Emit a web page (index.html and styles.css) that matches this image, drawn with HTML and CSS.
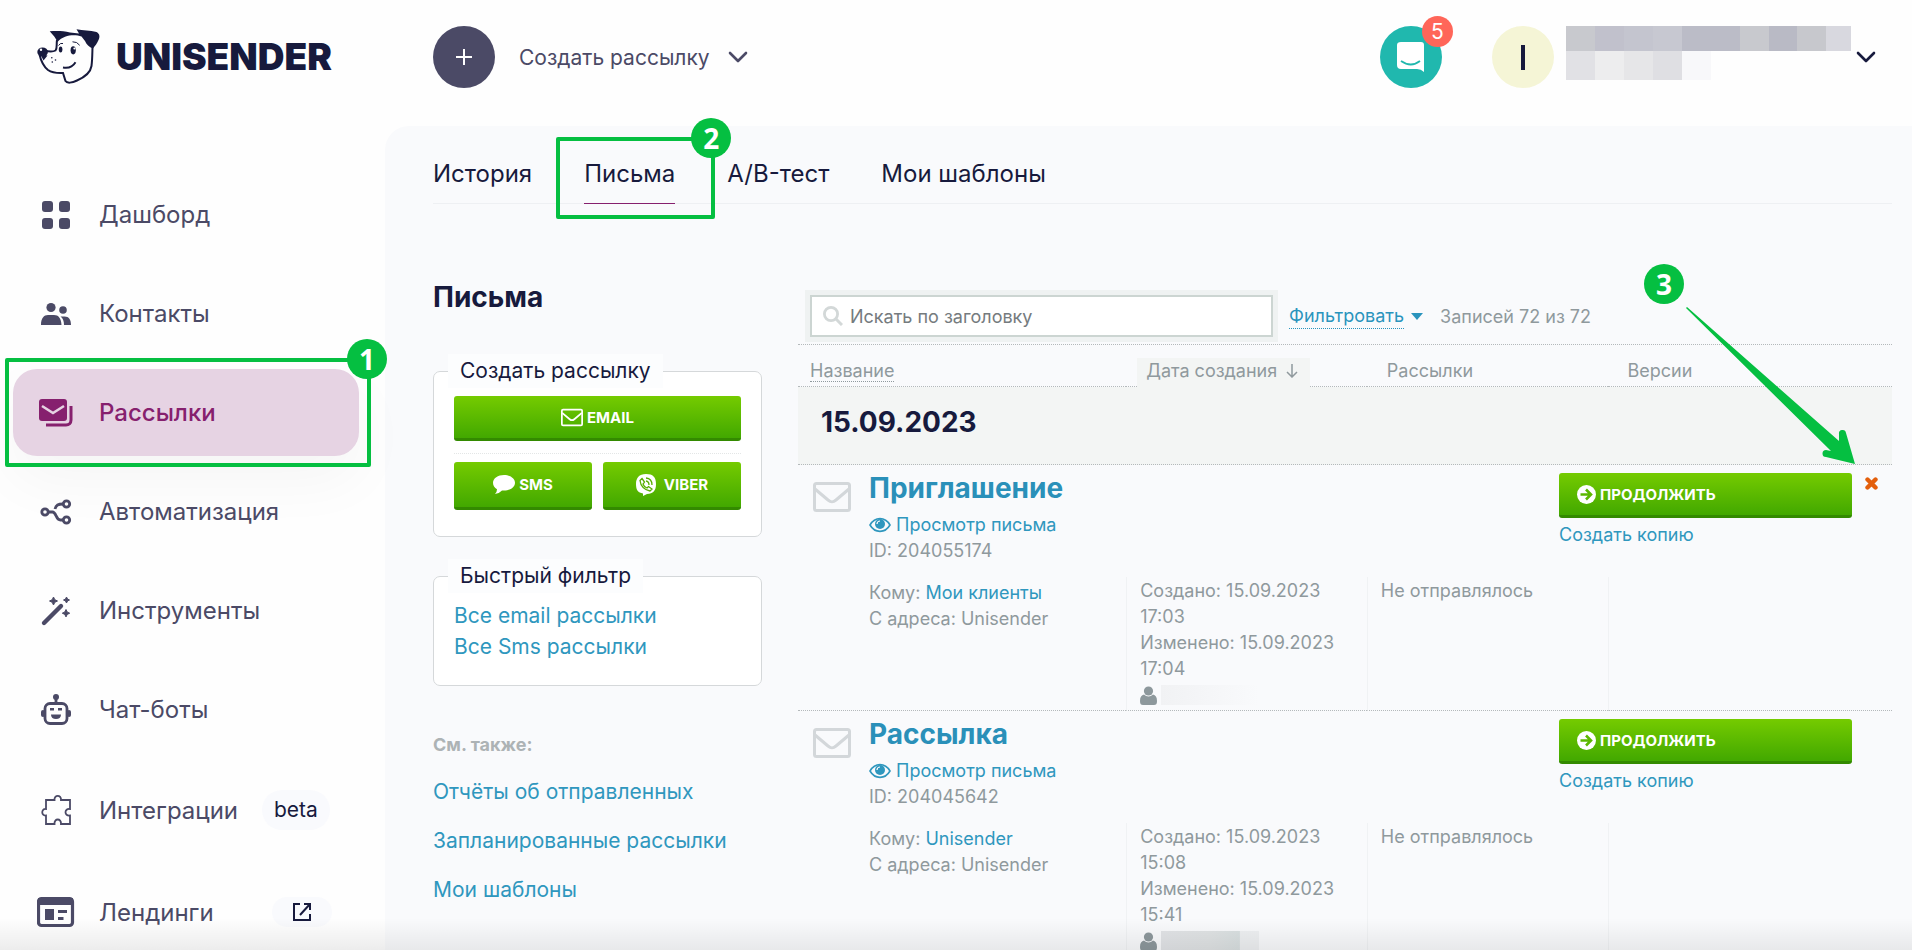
FILE: index.html
```html
<!DOCTYPE html>
<html lang="ru">
<head>
<meta charset="utf-8">
<title>Unisender — Письма</title>
<link rel="stylesheet" href="styles.css">
</head>
<body>
<svg class="sprite" aria-hidden="true">
  <symbol id="i-mail" viewBox="0 0 38 30"><rect x="1.5" y="1.5" width="35" height="27" rx="2"/><path d="M2 7l13 11c3 2.500 5 2.500 8 0l13-11"/></symbol>
  <symbol id="i-eye" viewBox="0 0 22 16"><path d="M1 8c5-8.500 15-8.500 20 0c-5 8.500-15 8.500-20 0z" fill="none" stroke="currentColor" stroke-width="1.600"/><circle cx="11" cy="7" r="5" fill="currentColor"/><path d="M8 7a3 3 0 0 1 3-3" fill="none" stroke="#fff" stroke-width="1.200"/></symbol>
  <symbol id="i-user" viewBox="0 0 17 19"><circle cx="8.500" cy="5" r="4.600"/><path d="M0 15c0-4 1.500-6 4-6.500c2.500 2.500 6.500 2.500 9 0c2.500.5 4 2.500 4 6.500c0 3-1 4-3 4h-11c-2 0-3-1-3-4z"/></symbol>
  <symbol id="i-go" viewBox="0 0 19 19"><circle cx="9.500" cy="9.500" r="9.500" fill="#fff"/><path d="M3.500 9.500h10M9 4.500l5 5l-5 5" fill="none" stroke="#5cb800" stroke-width="2.600"/></symbol>
  <symbol id="i-cross" viewBox="0 0 13 13"><path d="M2.500 2.500l8 8M10.500 2.500l-8 8" stroke="#e35f0c" stroke-width="4.400" stroke-linecap="round"/></symbol>
  <symbol id="i-chevron" viewBox="0 0 20 12"><path d="M2 2l8 8l8-8" fill="none" stroke="currentColor" stroke-width="2.600" stroke-linecap="round" stroke-linejoin="round"/></symbol>
</svg>

<div class="app">
  <aside class="sidebar">
    <a class="logo" href="#">
      <svg class="logo-dog" viewBox="0 0 63 56" aria-hidden="true">
        <path d="M12.700 3.300C19 2.600 26 2.700 33 4.500L42 5.500L39.500 1.200C46 2.500 53 2.300 59.500 4C63 6 63 9 61.500 12C60 15.500 58 18 56 20.500C52 19 49.500 16.500 48 13L44.500 8.500C38 6.300 27 6.500 20.500 14C19 10.500 16.500 7.500 12.700 3.300z" fill="#171a3d"/>
        <path d="M20 12C19.200 17 20.500 20 18.500 22.500C15 24.500 11 23.500 7 22.500M2.500 26.500C4 33 6 38 11 42C16 45.500 21 45 26 45L28.500 53C30 55.500 35 55 40 52.500C48 49 53.500 44.500 54.500 38C55.300 32 55.300 26 55.500 19" fill="none" stroke="#171a3d" stroke-width="2"/>
        <ellipse cx="5.600" cy="24" rx="5.300" ry="4.600" fill="#171a3d"/><path d="M3.500 26.500l3 6l4-5z" fill="#171a3d"/><circle cx="4" cy="21.800" r="1.200" fill="#fff"/>
        <ellipse cx="23.600" cy="21.500" rx="1.800" ry="2.900" fill="#171a3d"/><ellipse cx="36.200" cy="22.300" rx="2.600" ry="4.100" fill="#171a3d"/><circle cx="37.400" cy="20.500" r="1.100" fill="#fff"/>
        <path d="M21.500 17.500q2-3 4.500-2M35.500 13.800q4.500-.3 7.200 3.500" fill="none" stroke="#171a3d" stroke-width="1"/>
        <path d="M26 39.500Q34.500 41 38.500 34.200" fill="none" stroke="#171a3d" stroke-width="1.900"/>
        <circle cx="14.800" cy="29.800" r=".8" fill="#171a3d"/><circle cx="18.500" cy="32" r=".8" fill="#171a3d"/><circle cx="15.300" cy="34" r=".8" fill="#171a3d"/>
      </svg>
      <span class="logo-text">UNISENDER</span>
    </a>
    <nav class="menu" aria-label="Главное меню">
      <a class="menu-item" href="#"><svg class="menu-icon" viewBox="0 0 38 32"><g fill="#4b4a66"><rect x="5" y="2" width="11" height="11" rx="3"/><rect x="22" y="2" width="11" height="11" rx="3"/><rect x="5" y="19" width="11" height="11" rx="3"/><rect x="22" y="19" width="11" height="11" rx="3"/></g></svg>Дашборд</a>
      <a class="menu-item" href="#"><svg class="menu-icon" viewBox="0 0 38 32"><g fill="#4b4a66"><circle cx="14" cy="9.500" r="4.600"/><circle cx="26" cy="12" r="3.800"/><path d="M4 27c0-7 3-10 7-10h6c4.500 0 7 3 7.500 10zM23.500 18.500h4c4.500 0 6.500 3 6.500 8.500h-7c0-4-1-6.500-3.500-8.500z"/></g></svg>Контакты</a>
      <a class="menu-item menu-item-active" href="#" aria-current="page"><svg class="menu-icon" viewBox="0 0 38 32"><rect x="2" y="2" width="28" height="22" rx="3" fill="#86206e"/><path d="M5 9l11 7l11-7" fill="none" stroke="#e6d3e3" stroke-width="2.600"/><path d="M34 9v14c0 3-2 5-5 5H9" fill="none" stroke="#86206e" stroke-width="3"/></svg>Рассылки<span class="mark-frame mark-frame-menu"><span class="mark-number">1</span></span></a>
      <a class="menu-item" href="#"><svg class="menu-icon" viewBox="0 0 38 32"><g fill="none" stroke="#4b4a66" stroke-width="2.800"><circle cx="8" cy="16" r="3.200"/><circle cx="29.500" cy="8" r="3.200"/><circle cx="29.500" cy="24" r="3.200"/><path d="M11.500 16h4c4 0 3 8 8 8h2.500M18 13c1-4 3-5 8-5"/></g></svg>Автоматизация</a>
      <a class="menu-item" href="#"><svg class="menu-icon" viewBox="0 0 38 32"><path d="M7 28L24 11" stroke="#4b4a66" stroke-width="4.400" stroke-linecap="round"/><g fill="#4b4a66"><path d="M16.500 2l1.300 2.700l2.700 1.300l-2.700 1.300l-1.300 2.700l-1.300-2.700l-2.700-1.300l2.700-1.300z" stroke="#4b4a66"/><path d="M29.500 2l1 2l2 1l-2 1l-1 2l-1-2l-2-1l2-1z" stroke="#4b4a66"/><path d="M29 14.500l1.200 2.500l2.500 1.200l-2.500 1.200l-1.200 2.500l-1.200-2.500l-2.500-1.200l2.500-1.200z" stroke="#4b4a66"/></g></svg>Инструменты</a>
      <a class="menu-item" href="#"><svg class="menu-icon" viewBox="0 0 38 32"><g fill="none" stroke="#4b4a66" stroke-width="2.800"><rect x="8" y="9.500" width="22" height="20" rx="5"/><path d="M19 9V3"/></g><g fill="#4b4a66"><circle cx="19" cy="3" r="3"/><rect x="4" y="16" width="4" height="7" rx="2"/><rect x="30" y="16" width="4" height="7" rx="2"/><rect x="13" y="14" width="4" height="2.500"/><rect x="21" y="14" width="4" height="2.500"/><path d="M14 20.500h10c0 3-2 4.500-5 4.500s-5-1.500-5-4.500z"/></g></svg>Чат-боты</a>
      <a class="menu-item menu-item-tagged" href="#"><svg class="menu-icon" viewBox="0 0 38 32"><path d="M9 6h8.500c-.5-5.500 7-5.500 6.500 0H33v9c-6-1-6 7.500 0 6.500V30h-9c.5-6-7-6-6.500 0H9v-8.500c-5 .8-5-7.300 0-6.500z" fill="none" stroke="#4b4a66" stroke-width="1.800"/></svg>Интеграции<span class="tag">beta</span></a>
      <a class="menu-item menu-item-tagged" href="#"><svg class="menu-icon" viewBox="0 0 38 32"><rect x="1.500" y="2.500" width="34" height="27" rx="3" fill="none" stroke="#4b4a66" stroke-width="3.200"/><path d="M1 2h35v7H1z" fill="#4b4a66"/><path d="M8 13h9v11H8zM21 14h9v3h-9zM21 21h5.500v3H21z" fill="#4b4a66"/></svg>Лендинги<span class="tag tag-end"><svg class="ext-icon" viewBox="0 0 20 20"><path d="M8 2H2v16h16v-6M12 2h6v6M18 2L8 13" fill="none" stroke="#171a3d" stroke-width="2"/></svg></span></a>
    </nav>
  </aside>

  <div class="page">
    <header class="header">
      <button class="create" type="button"><span class="create-plus"><svg viewBox="0 0 16 16" class="plus-icon"><path d="M8 0v16M0 8h16" stroke="#fff" stroke-width="2"/></svg></span>Создать рассылку<svg class="chevron"><use href="#i-chevron"/></svg></button>
      <div class="header-right">
        <button class="chat" type="button" aria-label="Сообщения"><svg class="chat-icon" viewBox="0 0 28 31"><path d="M4 0h20q3 0 3 3v27q-3-3-7-3H4q-4 0-4-4V3q0-3 4-3z" fill="#fff"/><path d="M4 19q10 7 19 0" fill="none" stroke="#20b8ae" stroke-width="1.800"/></svg><span class="chat-count">5</span></button>
        <button class="account" type="button" aria-label="Аккаунт">
          <span class="avatar"><span class="avatar-bar"></span></span>
          <svg class="mosaic" viewBox="0 0 285 54" aria-hidden="true" shape-rendering="crispEdges">
            <path fill="#c8c9ce" d="M0 0h29v25H0z"/><path fill="#c1c1cc" d="M29 0h29v25H29z"/><path fill="#c4c5cf" d="M58 0h29v25H58z"/><path fill="#c7c8d1" d="M87 0h29v25H87z"/><path fill="#bbbcc7" d="M116 0h58v25h-58z"/><path fill="#c8c9ce" d="M174 0h29v25h-29z"/><path fill="#b9bac5" d="M203 0h28v25h-28z"/><path fill="#c7c8cd" d="M231 0h29v25h-29z"/><path fill="#d8d8df" d="M260 0h25v25h-25z"/>
            <path fill="#e1e1e5" d="M0 25h29v29H0z"/><path fill="#ededee" d="M29 25h29v29H29z"/><path fill="#e6e6e8" d="M58 25h29v29H58z"/><path fill="#dfdfe3" d="M87 25h29v29H87z"/><path fill="#f8f8fa" d="M116 25h29v29h-29z"/>
          </svg>
          <svg class="chevron"><use href="#i-chevron"/></svg>
        </button>
      </div>
    </header>

    <main class="main">
      <nav class="tabs" aria-label="Разделы">
        <a class="tab" href="#">История</a>
        <a class="tab tab-active" href="#" aria-current="page">Письма<span class="mark-frame mark-frame-tab"><span class="mark-number">2</span></span></a>
        <a class="tab" href="#">A/B-тест</a>
        <a class="tab" href="#">Мои шаблоны</a>
      </nav>

      <div class="columns">
        <div class="side">
          <h1 class="title">Письма</h1>
          <fieldset class="box">
            <legend class="box-title">Создать рассылку</legend>
            <button class="green-btn" type="button"><svg class="btn-icon btn-icon-line"><use href="#i-mail"/></svg>EMAIL</button>
            <div class="btn-pair">
              <button class="green-btn green-btn-tall" type="button"><svg class="btn-icon" viewBox="0 0 22 19"><path d="M11 0c6 0 11 3.300 11 7.800s-5 7.800-11 7.800h-2q-2.500 2.900-7 3.400q2-2 2-4.800C1.500 12.700 0 10.500 0 7.800C0 3.300 5 0 11 0z" fill="#fff"/></svg>SMS</button>
              <button class="green-btn green-btn-tall" type="button"><svg class="btn-icon btn-icon-viber" viewBox="0 0 20 22"><path d="M10 0C17 0 20 3 20 10s-3 9.500-9 10l-4 2v-2.500C2 18.500 0 16 0 10S3 0 10 0z" fill="#fff"/><path d="M6 4.500l2.500 3.500l-1.500 2q1 3 4 4l1.500-1.500l3.500 2.500l-2 2Q5 15 4 6.500zM10 4q6 .5 6 7M10 7q3 .5 3 4" fill="none" stroke="#58ae00" stroke-width="1.300"/></svg>VIBER</button>
            </div>
          </fieldset>
          <fieldset class="box box-links">
            <legend class="box-title">Быстрый фильтр</legend>
            <a class="link" href="#">Все email рассылки</a>
            <a class="link" href="#">Все Sms рассылки</a>
          </fieldset>
          <h2 class="see-title">См. также:</h2>
          <div class="see-list">
            <a class="link" href="#">Отчёты об отправленных</a>
            <a class="link" href="#">Запланированные рассылки</a>
            <a class="link" href="#">Мои шаблоны</a>
          </div>
        </div>

        <section class="letters">
          <div class="toolbar">
            <label class="search"><svg class="search-icon" viewBox="0 0 20 20"><circle cx="8" cy="8" r="6.600" fill="none" stroke="#d3d8d8" stroke-width="2.800"/><path d="M13 13l6 6" stroke="#d3d8d8" stroke-width="3"/></svg><input class="search-input" type="text" placeholder="Искать по заголовку" aria-label="Искать по заголовку"></label>
            <button class="filter" type="button"><span class="filter-text">Фильтровать</span><svg class="caret" viewBox="0 0 12 7"><path d="M0 0h12l-6 7z" fill="#2a94bd"/></svg></button>
            <span class="muted">Записей 72 из 72</span>
          </div>

          <table class="table">
            <colgroup><col class="c-name"><col class="c-date"><col class="c-sent"><col class="c-ver"></colgroup>
            <thead>
              <tr>
                <th scope="col"><a class="sort" href="#">Название</a></th>
                <th scope="col"><span class="sort-current">Дата создания<svg class="arrow-down" viewBox="0 0 12 14"><path d="M6 0v13M1 8l5 5l5-5" fill="none" stroke="#8f999d" stroke-width="1.500"/></svg></span></th>
                <th scope="col">Рассылки</th>
                <th scope="col">Версии</th>
              </tr>
            </thead>
            <tbody>
              <tr><th class="day" colspan="4" scope="rowgroup">15.09.2023</th></tr>
            </tbody>
            <tbody class="letter">
              <tr>
                <td colspan="2"><div class="letter-head">
                  <svg class="letter-icon"><use href="#i-mail"/></svg>
                  <div>
                    <a class="letter-title" href="#">Приглашение</a>
                    <a class="view" href="#"><svg class="eye"><use href="#i-eye"/></svg>Просмотр письма</a>
                    <div>ID: 204055174</div>
                  </div>
                </div></td>
                <td colspan="2"><div class="actions">
                  <div class="actions-main">
                    <button class="green-btn green-btn-go" type="button"><svg class="go-icon"><use href="#i-go"/></svg>ПРОДОЛЖИТЬ</button>
                    <a class="copy" href="#">Создать копию</a>
                  </div>
                  <div class="remove-slot"><button class="remove" type="button" aria-label="Удалить"><svg class="cross"><use href="#i-cross"/></svg></button>
                    <div class="mark-arrow"><span class="mark-number">3</span><svg class="mark-arrow-shape" viewBox="0 0 170 158"><path d="M1 0L0 1L145 144L140 143A3 3 0 0 0 140 150L169 157L160 126A3 3 0 0 0 153 127L153 134z" fill="#05bf41"/></svg></div>
                  </div>
                </div></td>
              </tr>
              <tr class="details">
                <td class="recipients">Кому: <a class="link" href="#">Мои клиенты</a><br>С адреса: Unisender</td>
                <td>Создано: 15.09.2023 17:03<br>Изменено: 15.09.2023 17:04<span class="author"><svg class="user"><use href="#i-user"/></svg><span class="smudge smudge-light"></span></span></td>
                <td>Не отправлялось</td>
                <td></td>
              </tr>
            </tbody>
            <tbody class="letter">
              <tr>
                <td colspan="2"><div class="letter-head">
                  <svg class="letter-icon"><use href="#i-mail"/></svg>
                  <div>
                    <a class="letter-title" href="#">Рассылка</a>
                    <a class="view" href="#"><svg class="eye"><use href="#i-eye"/></svg>Просмотр письма</a>
                    <div>ID: 204045642</div>
                  </div>
                </div></td>
                <td colspan="2"><div class="actions">
                  <div class="actions-main">
                    <button class="green-btn green-btn-go" type="button"><svg class="go-icon"><use href="#i-go"/></svg>ПРОДОЛЖИТЬ</button>
                    <a class="copy" href="#">Создать копию</a>
                  </div>
                  <div class="remove-slot"></div>
                </div></td>
              </tr>
              <tr class="details">
                <td class="recipients">Кому: <a class="link" href="#">Unisender</a><br>С адреса: Unisender</td>
                <td>Создано: 15.09.2023 15:08<br>Изменено: 15.09.2023 15:41<span class="author"><svg class="user"><use href="#i-user"/></svg><span class="smudge smudge-dark"></span></span></td>
                <td>Не отправлялось</td>
                <td></td>
              </tr>
            </tbody>
          </table>
        </section>
      </div>
    </main>
  </div>
  <div class="bottom-shade"></div>
</div>
</body>
</html>
```
FILE: styles.css
```css
* { box-sizing: border-box; }
body { margin: 0; background: #fefefe; color: #171a3d; font-family: Inter, "Liberation Sans", sans-serif; font-size: 18px; }
a { color: inherit; text-decoration: none; }
button { font-family: inherit; border: 0; background: none; padding: 0; cursor: pointer; }
svg { flex: none; display: block; }
.sprite { position: absolute; width: 0; height: 0; }

.app { position: relative; display: grid; grid-template-columns: 385px minmax(0, 1fr); height: 100vh; overflow: hidden; }
.bottom-shade { position: absolute; left: 0; right: 0; bottom: 0; height: 32px; background: linear-gradient(rgba(0,0,0,0), rgba(0,0,0,.07)); pointer-events: none; }

/* sidebar */
.logo { display: flex; align-items: center; gap: 16px; padding: 28px 0 0 37px; }
.logo-dog { width: 63px; height: 56px; }
.logo-text { padding-top: 2px; font-size: 37px; font-weight: 900; line-height: 54px; }
.menu { display: flex; flex-direction: column; gap: 12px; padding: 87px 26px 0 13px; }
.menu-item { position: relative; display: flex; align-items: center; gap: 24px; height: 87px; padding-left: 24px; border-radius: 24px; color: #4b4a66; font-size: 24px; }
.menu .menu-item { flex: none; }
.menu-item-active { background: #e6d3e3; color: #86206e; font-weight: 500; box-shadow: 0 24px 60px rgba(0,0,0,.04); }
.menu-item-tagged { height: 90px; }
.menu-icon { width: 38px; height: 32px; }
.tag { padding: 0 12px; min-width: 60px; border-radius: 20px; background: #f9fafd; color: #171a3d; font-size: 21px; line-height: 40px; }
.tag-end { display: flex; align-items: center; justify-content: center; margin-left: 34px; height: 30px; }
.ext-icon { width: 20px; height: 20px; }

/* numbered highlights */
.mark-frame { position: absolute; border: 4px solid #05bf41; border-radius: 2px; pointer-events: none; }
.mark-frame-menu { top: -11px; right: -12px; bottom: -11px; left: -8px; }
.mark-frame-tab { top: -21px; right: -40px; bottom: -16px; left: -28px; }
.mark-number { display: block; width: 40px; height: 40px; border-radius: 50%; background: #05bf41; color: #fff; font-family: "Open Sans", sans-serif; font-size: 28px; font-weight: 700; line-height: 40px; text-align: center; }
.mark-frame .mark-number { position: absolute; top: -23px; right: -20px; }
.mark-arrow { position: absolute; top: -209px; right: 36px; width: 212px; height: 213px; pointer-events: none; }
.mark-arrow-shape { position: absolute; right: 0; bottom: 12px; width: 170px; height: 158px; }

/* header */
.page { display: flex; flex-direction: column; min-width: 0; }
.header { display: flex; align-items: flex-start; justify-content: space-between; height: 126px; padding: 26px 36px 0 48px; flex: none; }
.create { display: flex; align-items: center; color: #4b4a66; font-size: 21px; }
.create-plus { display: grid; place-items: center; width: 62px; height: 62px; margin-right: 24px; border-radius: 50%; background: #4b4a66; }
.plus-icon { width: 16px; height: 16px; }
.chevron { width: 20px; height: 12px; margin-left: 18px; }
.header-right { display: flex; gap: 50px; }
.chat { position: relative; display: grid; place-items: center; width: 62px; height: 62px; border-radius: 50%; background: #20b8ae; }
.chat-icon { width: 28px; height: 31px; }
.chat-count { position: absolute; top: -10px; right: -11px; width: 31px; height: 31px; border-radius: 50%; background: #ff6659; color: #fff; font-size: 21px; line-height: 31px; }
.account { display: flex; align-items: center; color: #171a3d; }
.account .chevron { margin-left: 5px; }
.avatar { display: grid; place-items: center; width: 62px; height: 62px; margin-right: 12px; border-radius: 50%; background: #f5f5d6; }
.avatar-bar { width: 4px; height: 25px; background: #171a3d; }
.mosaic { width: 285px; height: 54px; align-self: flex-start; }

/* content */
.main { flex: 1; min-height: 0; padding: 32px 20px 0 48px; border-top-left-radius: 24px; background: #f9fafc; }
.tabs { display: flex; gap: 52px; border-bottom: 1px solid #eef0f3; font-size: 24px; line-height: 32px; }
.tab { position: relative; padding-bottom: 13px; margin-bottom: -1px; }
.tab-active { border-bottom: 1px solid #86206e; }
.columns { display: grid; grid-template-columns: 329px minmax(0, 1fr); gap: 36px; padding-top: 76px; }
.title { margin: 0 0 40px; font-size: 28px; line-height: 34px; font-weight: 700; }
.box { margin: 0; padding: 8px 20px 26px; border: 1px solid #d5d8da; border-radius: 7px; background: #fff; }
.box + .box { margin-top: 22px; }
.box-title { margin-left: -6px; padding: 0 12px; background: #fcfdfe; font-size: 21px; line-height: 34px; }
.box-links { display: grid; padding-top: 7px; padding-bottom: 23px; font-size: 21px; line-height: 31px; }
.link, .view, .copy { color: #2f97be; }
.green-btn { display: flex; align-items: center; justify-content: center; gap: 4px; width: 100%; height: 45px; border-radius: 3px; border-bottom: 3px solid #338a00; background: linear-gradient(#75cb00, #42a800); color: #fff; font-size: 15px; font-weight: 700; }
.green-btn-tall { height: 48px; }
.btn-pair { display: grid; grid-template-columns: 1fr 1fr; gap: 11px; margin-top: 12px; padding-top: 8px; border-top: 1px dotted #e3e6e6; }
.btn-icon { width: 22px; height: 19px; }
.btn-icon-line { fill: none; stroke: #fff; stroke-width: 3px; }
.btn-icon-viber { width: 20px; height: 22px; margin-right: 4px; }
.see-title { margin: 46px 0 21px; color: #adb3b5; font-size: 18px; line-height: 26px; }
.see-list { display: grid; gap: 23px; font-size: 21px; line-height: 26px; }

/* letters table */
.toolbar { display: flex; align-items: center; padding: 15px 0 7px 12px; border-bottom: 1px dotted #b4b9bb; }
.search { display: flex; align-items: center; width: 463px; height: 42px; padding-left: 11px; border: 2px solid #ccd5d2; background: #fff; box-shadow: 0 0 0 5px #eff2f2; }
.search-icon { width: 20px; height: 20px; }
.search-input { flex: 1; min-width: 0; margin-left: 5px; border: 0; outline: 0; background: none; font-family: inherit; font-size: 18px; }
.search-input::placeholder { color: #757b7e; }
.filter { display: flex; align-items: center; gap: 7px; margin: 0 17px 0 16px; color: #2a94bd; font-size: 18px; }
.filter-text { line-height: 24px; border-bottom: 1px dotted #2a94bd; }
.caret { width: 12px; height: 7px; }
.muted { color: #8f999d; }
.table { width: 100%; table-layout: fixed; border-collapse: separate; border-spacing: 0; color: #8f999d; line-height: 26px; }
.c-name { width: 30%; }
.c-date, .c-sent { width: 22%; }
.table th { text-align: left; font-weight: 400; }
.table td { padding: 0; vertical-align: top; }
.table thead th { height: 42px; padding: 14px 0 0 20px; vertical-align: top; line-height: 24px; border-bottom: 1px dotted #b4b9bb; }
.table thead th:first-child { padding-left: 12px; }
.table thead th:nth-child(2) { padding: 13px 0 0 11px; }
.sort { border-bottom: 1px dotted #8f999d; }
.sort-current { display: inline-flex; align-items: center; gap: 9px; height: 29px; margin-bottom: -1px; padding: 0 12px 4px 9px; background: #f3f5f4; vertical-align: top; }
.arrow-down { width: 12px; height: 14px; }
.table .day { height: 78px; padding: 0 0 8px 23px; border-bottom: 1px dotted #b4b9bb; background: #f3f5f4; color: #171a3d; font-size: 28px; font-weight: 700; }
.letter-head { display: flex; gap: 18px; padding: 6px 0 13px 15px; }
.letter-icon { width: 38px; height: 30px; margin-top: 11px; fill: none; stroke: #d3d7da; stroke-width: 3px; }
.letter-title { display: block; margin-bottom: 7px; color: #2a90b9; font-size: 28px; font-weight: 700; line-height: 34px; }
.view { display: flex; align-items: center; gap: 5px; }
.eye { width: 22px; height: 16px; }
.actions { display: flex; justify-content: flex-end; padding-top: 8px; }
.actions-main { width: 293px; }
.green-btn-go { justify-content: flex-start; gap: 4px; padding-left: 18px; }
.go-icon { width: 19px; height: 19px; }
.copy { display: block; margin-top: 4px; }
.remove-slot { position: relative; width: 40px; padding: 4px 0 0 13px; }
.remove { display: block; }
.cross { width: 13px; height: 13px; }
.table .details td { height: 134px; padding: 1px 0 0 13px; border-left: 1px solid #f0f2f4; border-bottom: 1px dotted #b4b9bb; }
.table .details .recipients { padding: 3px 0 0 71px; border-left: 0; }
.author { display: flex; align-items: center; gap: 4px; height: 26px; }
.user { width: 17px; height: 19px; fill: #8d989c; }
.smudge { width: 98px; height: 20px; }
.smudge-light { background: linear-gradient(90deg, #f1f2f4, #f9fafc); }
.smudge-dark { background: linear-gradient(90deg, #e2e4e7, #e0e3e4 50%, #d9e0e1 80%, #eef0f2 81%); }
```
